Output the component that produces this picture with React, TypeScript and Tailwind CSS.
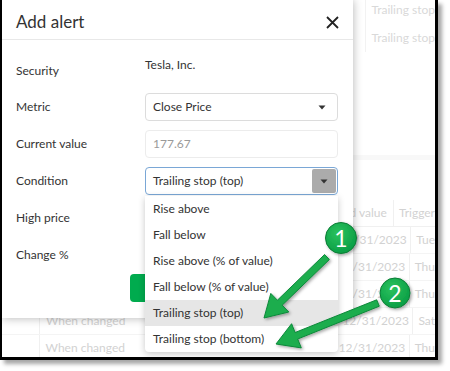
import React from "react";

type Pt = [number, number];

function arrowPoints(s: Pt, t: Pt, w = 7, len = 21, head = 24) {
  const dx = t[0] - s[0];
  const dy = t[1] - s[1];
  const d = Math.hypot(dx, dy);
  const ux = dx / d;
  const uy = dy / d;
  const nx = -uy;
  const ny = ux;
  const bx = t[0] - ux * len;
  const by = t[1] - uy * len;
  const pts: Pt[] = [
    [s[0] + (nx * w) / 2, s[1] + (ny * w) / 2],
    [bx + (nx * w) / 2, by + (ny * w) / 2],
    [bx + (nx * head) / 2, by + (ny * head) / 2],
    t,
    [bx - (nx * head) / 2, by - (ny * head) / 2],
    [bx - (nx * w) / 2, by - (ny * w) / 2],
    [s[0] - (nx * w) / 2, s[1] - (ny * w) / 2],
  ];
  return pts.map((p) => p.map((v) => v.toFixed(1)).join(",")).join(" ");
}

function Caret() {
  return (
    <svg width="8" height="5" viewBox="0 0 8 5">
      <path d="M0.5 0.5h7L4 4.5z" fill="#333" />
    </svg>
  );
}

const rows = [
  { day: "Tue", date: "12/31/2023" },
  { day: "Thu", date: "12/31/2023" },
  { day: "Thu", date: "12/31/2023" },
  { day: "Sat", date: "12/31/2023" },
  { day: "Thu", date: "12/31/2023" },
];

const options = [
  "Rise above",
  "Fall below",
  "Rise above (% of value)",
  "Fall below (% of value)",
  "Trailing stop (top)",
  "Trailing stop (bottom)",
];

export default function App() {
  return (
    <div className="relative h-[371px] w-[450px] bg-white font-['Lato',sans-serif] text-[12px] text-[#333]">
      <div className="relative h-[360px] w-[438px] overflow-hidden border-b-[3px] border-l-2 border-r-[3px] border-black shadow-[4px_4px_4px_rgba(0,0,0,0.35)]">
        {/* page behind the dialog */}
        <div className="flex h-[52px]">
          <div className="w-[373px]" />
          <div className="flex flex-col whitespace-nowrap border-l border-[#f2f2f2] pl-[5px] pt-[2px] text-[#d9d9d9]">
            <div className="h-[28px] leading-[16px]">Trailing stop</div>
            <div className="leading-[16px]">Trailing stop</div>
          </div>
        </div>
        <div className="h-[103px]" />
        <div className="h-[5px] bg-[#f8f8f8]" />
        <div className="h-[40px]" />
        <div className="flex h-[27px] items-center whitespace-nowrap border-b border-[#f0f0f0] text-[#d2d2d2]">
          <div className="w-[38px]" />
          <div className="w-[303px]" />
          <div className="flex w-[70px] justify-end pr-[6px]">
            <span>Triggered value</span>
          </div>
          <div className="flex h-full items-center border-l border-[#f0f0f0] pl-[5px]">Trigger</div>
        </div>
        {rows.map((r, i) => (
          <div key={i} className="flex h-[27px] items-center border-b border-[#f4f4f4] text-[#d2d2d2]">
            <div className="h-full w-[38px] border-r border-[#f0f0f0]" />
            <div className="w-[303px] pl-[6px]">When changed</div>
            <div className="w-[70px] pr-[6px] text-right">{r.date}</div>
            <div className="flex h-full items-center border-l border-[#f0f0f0] pl-[5px]">{r.day}</div>
          </div>
        ))}

        {/* dialog */}
        <div className="absolute left-0 top-0 h-[318px] w-[351px] bg-white shadow-[0_0_9px_rgba(0,0,0,0.3)]">
          <div className="flex h-[40px] items-center justify-between border-b border-[#e8e8e8] pl-[14px] pr-[14px] pt-[5px]">
            <span className="text-[17px] text-[#333]">Add alert</span>
            <svg width="13" height="13" viewBox="0 0 13 13">
              <path d="M1 1l11 11M12 1L1 12" stroke="#222" strokeWidth="1.8" />
            </svg>
          </div>
          <div className="flex flex-col gap-[9px] pt-[16px]">
            <div className="flex h-[28px]">
              <div className="flex w-[143px] items-center pl-[14px] pt-[1px]">Security</div>
              <div className="leading-[18px]">Tesla, Inc.</div>
            </div>
            <div className="flex h-[28px]">
              <div className="flex w-[143px] items-center pl-[14px]">Metric</div>
              <div className="flex w-[193px] items-center justify-between rounded-[4px] border border-[#dcdcdc] pl-[7px] pr-[11px]">
                <span>Close Price</span>
                <Caret />
              </div>
            </div>
            <div className="flex h-[28px]">
              <div className="flex w-[143px] items-center pl-[14px]">Current value</div>
              <div className="flex w-[193px] items-center rounded-[4px] border border-[#ececec] pl-[7px] text-[#9a9a9a]">
                177.67
              </div>
            </div>
            <div className="flex h-[28px]">
              <div className="flex w-[143px] items-center pl-[14px]">Condition</div>
              <div className="flex w-[193px] items-center justify-between rounded-[4px] border border-[#7aa7d6] p-[1px] pl-[7px]">
                <span>Trailing stop (top)</span>
                <div className="flex h-full w-[24px] items-center justify-center rounded-[2px] bg-[#ababab]">
                  <Caret />
                </div>
              </div>
            </div>
            <div className="flex h-[28px]">
              <div className="flex w-[143px] items-center pl-[14px]">High price</div>
            </div>
            <div className="flex h-[28px]">
              <div className="flex w-[143px] items-center pl-[14px]">Change %</div>
            </div>
            <div className="-mt-[4px] flex pl-[128px]">
              <button aria-label="Save" className="h-[28px] w-[70px] rounded-[4px] bg-[#00ab4e]" />
            </div>
          </div>
        </div>

        {/* open list */}
        <div className="absolute left-[143px] top-[196px] w-[193px] overflow-hidden rounded-b-[4px] bg-white shadow-[0_2px_7px_rgba(0,0,0,0.22)]">
          {options.map((o, i) => (
            <div
              key={o}
              className={`flex h-[26px] items-center pl-[8px] ${i === 4 ? "bg-[#e6e6e6]" : ""}`}
            >
              {o}
            </div>
          ))}
        </div>
      </div>

      {/* callouts */}
      <svg className="pointer-events-none absolute left-0 top-0" width="450" height="371" viewBox="0 0 450 371">
        <defs>
          <filter id="sh" x="-30%" y="-30%" width="160%" height="160%">
            <feDropShadow dx="1.5" dy="1.5" stdDeviation="1.5" floodColor="#000" floodOpacity="0.35" />
          </filter>
          <radialGradient id="g" cx="40%" cy="35%" r="70%">
            <stop offset="0" stopColor="#2bc25e" />
            <stop offset="1" stopColor="#089c43" />
          </radialGradient>
        </defs>
        <g filter="url(#sh)">
          <polygon points={arrowPoints([327, 257], [264, 318], 7, 22, 26)} fill="#1aad4e" stroke="#10883a" strokeWidth="1" strokeLinejoin="round" />
          <polygon points={arrowPoints([378, 303], [276, 344], 7, 22, 26)} fill="#1aad4e" stroke="#10883a" strokeWidth="1" strokeLinejoin="round" />
          <circle cx="341" cy="238" r="15.5" fill="url(#g)" stroke="#0b7d36" strokeWidth="1" />
          <circle cx="395" cy="293" r="15" fill="url(#g)" stroke="#0b7d36" strokeWidth="1" />
        </g>
        <text x="341" y="246.5" textAnchor="middle" fill="#fff" fontFamily="Lato, sans-serif" fontSize="23">1</text>
        <text x="395" y="301.5" textAnchor="middle" fill="#fff" fontFamily="Lato, sans-serif" fontSize="23">2</text>
      </svg>
    </div>
  );
}
